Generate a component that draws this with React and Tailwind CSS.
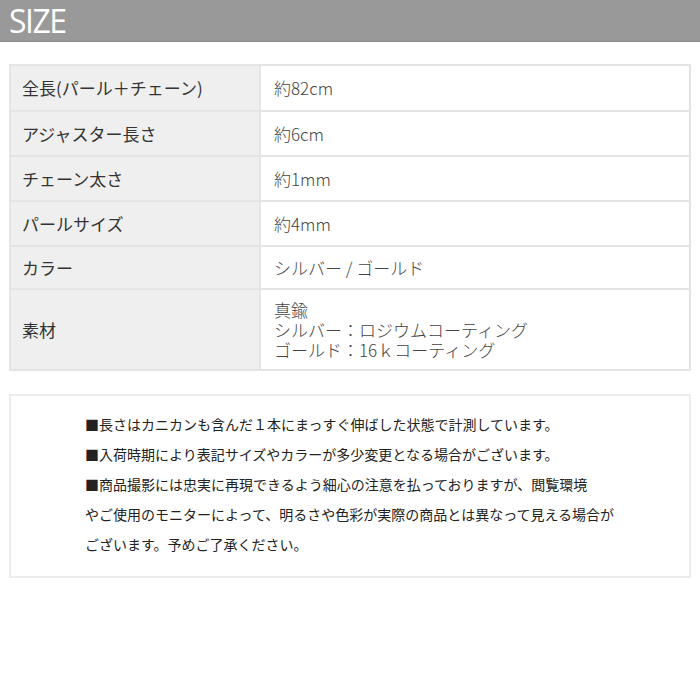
export default function App() {
  const jp = { fontFamily: '"Noto Sans CJK JP", "Noto Sans", sans-serif' };
  const rows = [
    { k: "全長(パール＋チェーン)", v: ["約82cm"], h: "h-[44px]" },
    { k: "アジャスター長さ", v: ["約6cm"], h: "h-[45px]" },
    { k: "チェーン太さ", v: ["約1mm"], h: "h-[45px]" },
    { k: "パールサイズ", v: ["約4mm"], h: "h-[45px]" },
    { k: "カラー", v: ["シルバー / ゴールド"], h: "h-[43px]" },
    { k: "素材", v: ["真鍮", "シルバー：ロジウムコーティング", "ゴールド：16ｋコーティング"], h: "h-[81px]" },
  ];
  const notes = [
    "■長さはカニカンも含んだ１本にまっすぐ伸ばした状態で計測しています。",
    "■入荷時期により表記サイズやカラーが多少変更となる場合がございます。",
    "■商品撮影には忠実に再現できるよう細心の注意を払っておりますが、閲覧環境",
    "やご使用のモニターによって、明るさや色彩が実際の商品とは異なって見える場合が",
    "ございます。予めご了承ください。",
  ];
  return (
    <div className="w-[700px] h-[700px] bg-white overflow-hidden" style={jp}>
      <div className="h-[42px] bg-[#999999] flex items-center pl-[9px] border-b border-[#8f8f8f]">
        <span
          className="text-white text-[32px] leading-none tracking-[-1.5px]"
          style={{ fontFamily: '"Open Sans", sans-serif' }}
        >
          SIZE
        </span>
      </div>
      <div className="mt-[22px] mx-[9px] border-2 border-[#e4e4e4] flex flex-col">
        {rows.map((r, i) => (
          <div
            key={i}
            className={`grid grid-cols-[250px_1fr] ${r.h} ${i > 0 ? "border-t-2 border-[#e4e4e4]" : ""}`}
          >
            <div className="bg-[#efefef] border-r-2 border-[#e4e4e4] flex items-center pl-[11px] text-[17px] text-[#333333]">
              {r.k}
            </div>
            <div className="flex flex-col justify-center pl-[13px] text-[17px] leading-[20px] text-[#444444] font-light">
              {r.v.map((t, j) => (
                <div key={j}>{t}</div>
              ))}
            </div>
          </div>
        ))}
      </div>
      <div className="mt-[23px] mx-[9px] h-[184px] border-2 border-[#ececec] pt-[13px] pl-[74px] text-[14px] leading-[30px] text-[#222222]">
        {notes.map((n, i) => (
          <div key={i}>{n}</div>
        ))}
      </div>
    </div>
  );
}
